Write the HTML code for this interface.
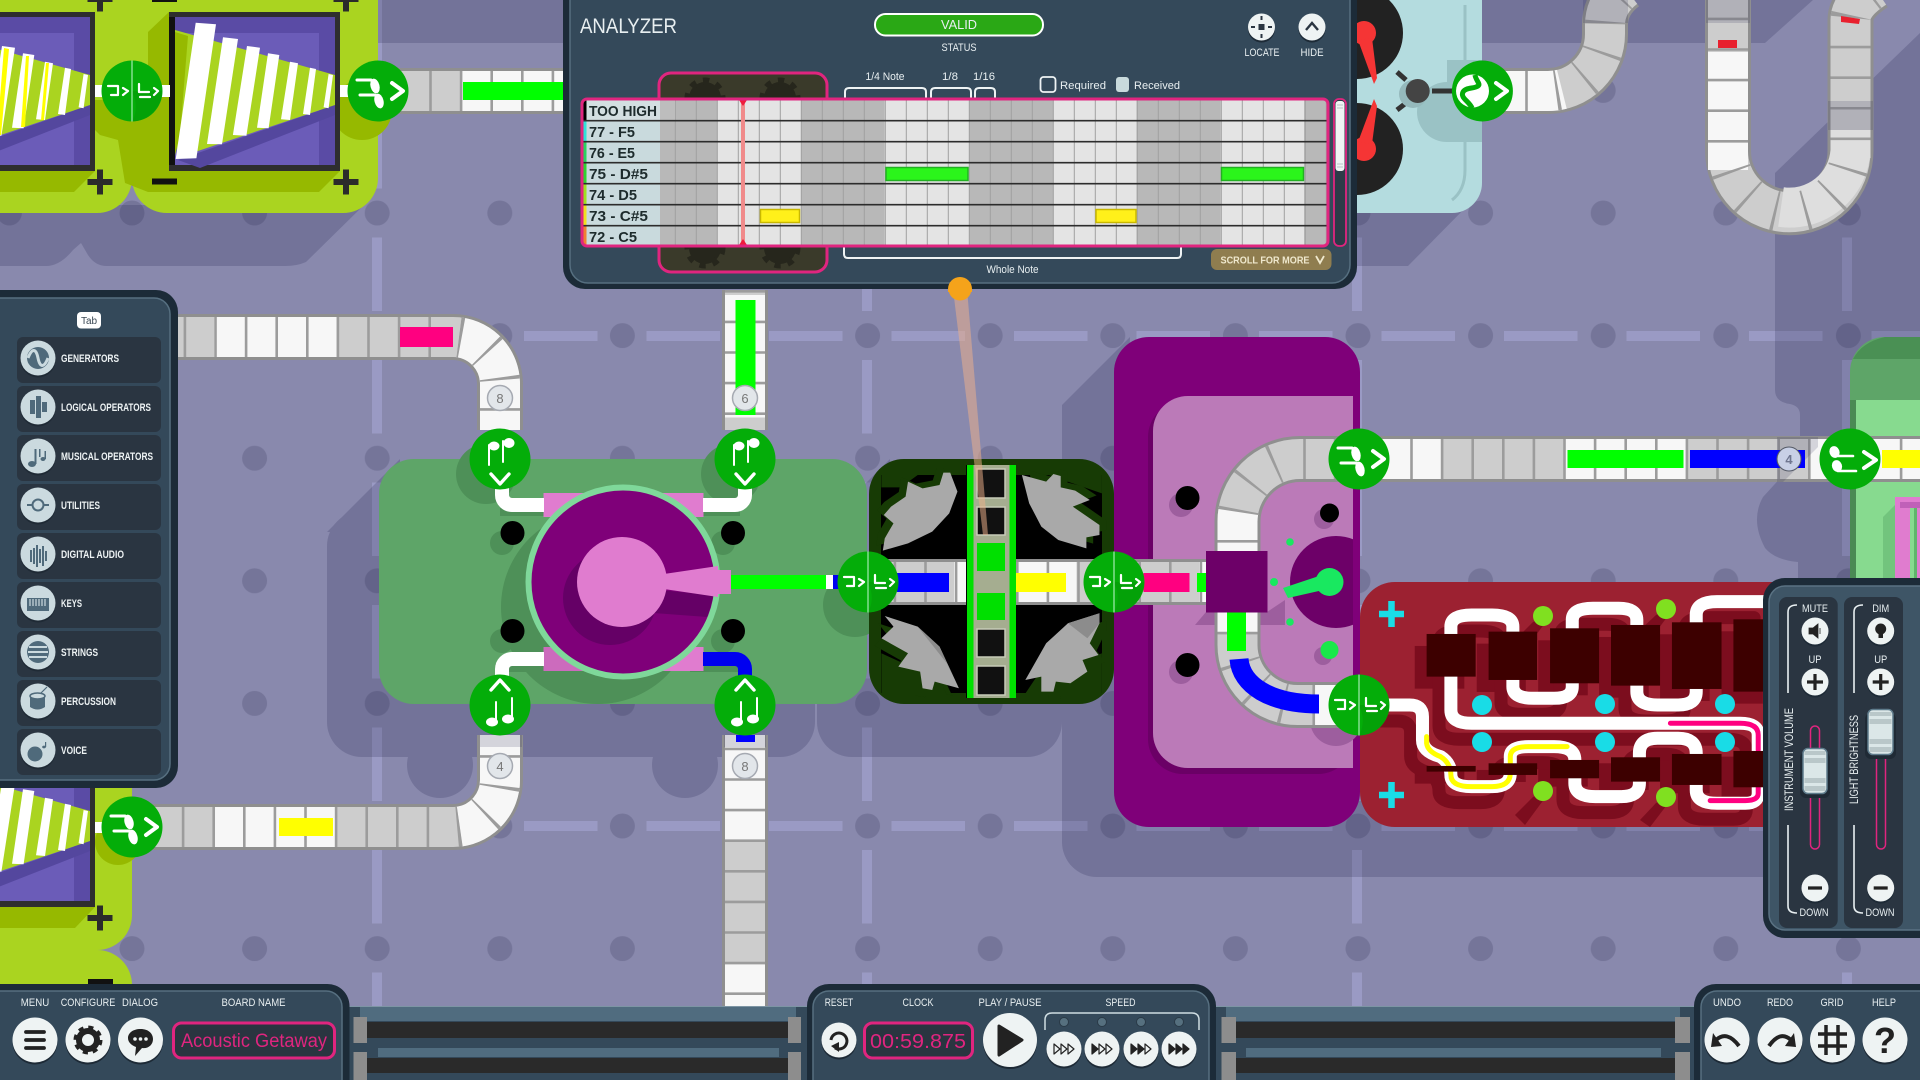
<!DOCTYPE html>
<html lang="en"><head><meta charset="utf-8"><title>Acoustic Getaway</title>
<style>
html,body{margin:0;padding:0;background:#8989ad;width:1920px;height:1080px;overflow:hidden}
svg{display:block}
text{font-family:"Liberation Sans",sans-serif}
.t{fill:#e8eff1;font-size:11px;text-anchor:middle}
.l{fill:#eef3f4;font-size:11px;font-weight:bold}
.r{fill:#1d2b2c;font-size:15px;font-weight:bold}
.cb{fill:none;stroke:#8f8f8f;stroke-width:46}
.cg{fill:none;stroke:#cdcdcd;stroke-width:40}
.cw{fill:none;stroke:#f7f7f7;stroke-width:40;stroke-dasharray:122.5 122.5}
.cs{fill:none;stroke:#9c9c9c;stroke-width:40;stroke-dasharray:2.6 28}
.ic{fill:none;stroke:#fff;stroke-linecap:round;stroke-linejoin:round}
.w{fill:none;stroke-linecap:round;stroke-linejoin:round;vector-effect:non-scaling-stroke}
</style></head><body>
<svg width="1920" height="1080" viewBox="0 0 1920 1080" xmlns="http://www.w3.org/2000/svg">
<defs>
<pattern id="dots" patternUnits="userSpaceOnUse" x="70.7" y="151.7" width="122.6" height="122.6"><circle cx="61.3" cy="61.3" r="12.5" fill="#757599"/></pattern>
<g id="cone">
 <rect x="169" y="12" width="171" height="159" fill="#2e2e2e"/>
 <rect x="175" y="17" width="160" height="148" fill="#5a4ba5"/>
 <rect x="175" y="33" width="144" height="132" fill="#6b5cb8"/>
 <rect x="169" y="17" width="6" height="148" fill="#111"/>
 <polygon points="178,160 335,105 335,115 200,168" fill="#54479e"/>
 <polygon points="175,30 335,75 335,105 177,158" fill="#aad420"/>
 <polygon points="175,32 188,36 180,135 175,155" fill="#96b900"/>
 <g fill="#fff">
 <polygon points="195.7,22.7 216,24.3 196.4,158.3 175.7,159"/>
 <polygon points="223,37.3 238,39 222,144.3 207,144"/>
 <polygon points="247,46 260,47.7 246.4,135.7 232.9,135"/>
 <polygon points="268,53.3 279.3,55 268.6,128.3 257,127.7"/>
 <polygon points="290,61.7 298,63.3 290,120 281,119.3"/>
 <polygon points="310,67.7 316,69 310,115 303,114"/>
 <polygon points="328.6,74 333,75 328.6,108.3 323.6,107.3"/>
 </g>
</g>
<g id="plus"><path d="M-12.5 0H12.5M0-12.5V12.5" stroke="#2b2b2b" stroke-width="6" fill="none"/></g>
<g id="pOut"><circle r="30.5" fill="#04ad09"/>
 <path class="ic" stroke-width="3" d="M-21 -11H-7M-18 4H-3"/>
 <ellipse cx="-3" cy="-5" rx="4.5" ry="7.5" fill="#fff" transform="rotate(-15 -3 -5)"/><ellipse cx="1" cy="10" rx="4.5" ry="7.5" fill="#fff" transform="rotate(-15 1 10)"/>
 <path class="ic" stroke-width="4" d="M14 -8L25 0L14 8"/></g>
<g id="pIn"><circle r="30.5" fill="#04ad09"/>
 <path class="ic" stroke-width="2.6" d="M-12 -3H3M-12 12H6"/>
 <ellipse cx="-15.500" cy="-7" rx="5" ry="6" fill="#fff" transform="rotate(-20 -15.500 -7)"/><ellipse cx="-13" cy="7" rx="5" ry="6" fill="#fff" transform="rotate(-20 -13 7)"/>
 <path class="ic" stroke-width="4" d="M14 -7L26 1L14 9"/></g>
<g id="pSplit"><circle r="30.5" fill="#04ad09"/><path d="M0 1A30.5 30.5 0 0 1 0 30.5A30.5 30.5 0 0 0 30 0H0Z" fill="#049507" opacity=".5"/>
 <path d="M0 -30.5V30.5" stroke="#8fe39a" stroke-width="1.4"/>
 <path class="ic" stroke-width="2.2" d="M-24 -5H-14V3M-21 4H-14M-9 -3L-4 0L-9 4M7 -7V1H17M8 6H18M22 -3L26 0L22 4"/></g>
<g id="pDown"><circle r="30.5" fill="#04ad09"/>
 <path class="ic" stroke-width="2" d="M-11 -14V6M3 -18V3"/>
 <ellipse cx="-6" cy="-13" rx="5.5" ry="4.5" fill="#fff"/><ellipse cx="9" cy="-16" rx="5.5" ry="5" fill="#fff"/>
 <path class="ic" stroke-width="3.4" d="M-9 15L0 25L9 15"/></g>
<g id="pUp"><circle r="30.5" fill="#04ad09"/>
 <path class="ic" stroke-width="2" d="M-4 -3V16M12 -7V13"/>
 <ellipse cx="-8" cy="17" rx="6" ry="4.5" fill="#fff"/><ellipse cx="8" cy="14" rx="6" ry="4.5" fill="#fff"/>
 <path class="ic" stroke-width="3.4" d="M-9 -15L0 -25L9 -15"/></g>
<g id="badge"><circle r="12.5" fill="#e2e6ea" stroke="#a6aab2" stroke-width="1.5"/></g>
<path id="c1" d="M378 91H570"/>
<path id="c2" d="M178 337H453A47 47 0 0 1 500 384V430"/>
<path id="c3" d="M745 290V430"/>
<path id="c4" d="M745 735V1012"/>
<path id="c5" d="M500 735V780A47 47 0 0 1 453 827H132"/>
<path id="c6" d="M868 582H1207"/>
<path id="c8" d="M1359 459H1300A62.5 62.5 0 0 0 1237.5 521.5V645A60 60 0 0 0 1297.5 705H1359"/>
<path id="c9" d="M1359 459H1925"/>
<path id="c10" d="M1482 91H1548A57 57 0 0 0 1605 34V25C1605 10 1612 -2 1625 -12"/>
<path id="c11" d="M1728 -10V151A61.25 61.25 0 0 0 1850.5 151V20C1850.5 8 1860 -2 1875 -12"/>
<path id="wire" class="w" d="M540 1125H580Q605 1125 605 1160V1230Q605 1265 640 1280Q660 1300 660 1335Q660 1370 700 1370H740Q775 1370 775 1330V1280Q775 1250 810 1250H860Q900 1250 900 1290V1360Q900 1400 940 1400H990Q1025 1400 1025 1360V1270Q1025 1225 1060 1225H1100Q1135 1225 1135 1270V1380Q1135 1420 1175 1420H1230Q1255 1420 1255 1390V1215Q1255 1180 1220 1180H700Q660 1180 660 1140V890Q660 855 700 855H740Q780 855 780 890V1070Q780 1105 820 1105H860Q895 1105 895 1070V870Q895 835 935 835H985Q1020 835 1020 870V1085Q1020 1125 1060 1125H1100Q1135 1125 1135 1085V855Q1135 815 1175 815H1270"/>
<g id="tmi"><circle r="22.5" cy="2" fill="#1d2a36"/><circle r="22.5" fill="#eef3f3"/></g>
<g id="row"><rect x="17" y="337" width="144" height="46" rx="6" fill="#2a3541"/><circle cx="38" cy="360" r="17.5" fill="#1f2a35"/><circle cx="38" cy="358" r="17.5" fill="#cbdadf"/></g>
<g id="sm"><circle r="13.5" cy="2" fill="#1d2a36"/><circle r="13.5" fill="#eef3f3"/></g>
<polygon id="g1" points="1058,452 1110,430 1160,395 1195,340 1212,275 1197,218 1183,218 1175,255 1140,265 1110,245 1105,290 1075,320 1060,345 1080,370 1062,415"/>
<polygon id="g2" points="1345,225 1395,245 1410,222 1425,228 1425,262 1455,272 1485,300 1450,320 1505,375 1505,405 1478,412 1478,445 1420,420 1385,380 1360,310"/>
<polygon id="g3" points="1062,648 1130,680 1175,740 1215,865 1165,845 1160,870 1140,865 1135,815 1090,800 1110,760 1055,715 1080,680"/>
<polygon id="g4" points="1505,640 1440,670 1395,730 1352,840 1385,830 1385,875 1410,875 1415,845 1445,850 1480,815 1470,780 1503,765 1485,730 1505,670"/>
</defs>

<rect width="1920" height="1080" fill="#8989ad"/>
<g stroke="#9a9ac4" stroke-width="10" stroke-dasharray="73.5 49" fill="none">
 <path d="M377 -7.5V1080M867 -7.5V1080M1357 -7.5V1080M1847 -7.5V1080"/>
 <path d="M34 336H1920M34 826H1920"/>
</g>
<rect width="1920" height="1080" fill="url(#dots)"/>

<!-- shadows -->
<g fill="#20204c" opacity=".2">
 <polygon points="378,0 565,0 565,43 378,43"/>
 <polygon points="1482,0 1813,0 1765,43 1482,43"/>
 <path d="M0 205H364L306 262Q297 266 285 266H107Q95 266 88 255L81 243L73 250Q60 266 46 266H0Z"/>
 <polygon points="1357,213 1473,200 1408,266 1357,266"/>
 <path d="M1920 33L1775 173V390Q1775 402 1790 404Q1800 406 1800 415V440H1815L1763 497Q1750 520 1765 548Q1775 560 1798 562V580H1920Z"/>
 <rect x="327" y="511" width="488" height="246" rx="35"/>
 <polygon points="400,459 327,532 400,532"/>
 <rect x="817" y="511" width="245" height="246" rx="35"/>
 <polygon points="890,459 817,532 890,532"/>
 <path d="M1130 337L1062 405V842A35 35 0 0 0 1097 877H1770V700H1114Z"/>
 <circle cx="440" cy="765" r="33"/><circle cx="685" cy="765" r="33"/>
</g>

<!-- lime blocks -->
<g fill="#aad420">
 <path d="M132 -50H378V178A35 35 0 0 1 343 213H167A35 35 0 0 1 132 178Z"/>
 <path d="M-50 -50H132V178A35 35 0 0 1 97 213H-50Z"/>
 <path d="M-50 770H132V915A35 35 0 0 1 97 950H-50Z"/>
 <path d="M-50 950H97A35 35 0 0 1 132 985V1000H-50Z"/>
</g>
<g fill="#96b900">
 <polygon points="-50,171 95,171 74,192 -50,192"/>
 <polygon points="95,100 148,100 148,192 125,183 118,140 100,135 95,130"/>
 <circle cx="362" cy="110" r="30"/>
 <polygon points="-50,907 95,907 75,928 -50,928"/>
 <circle cx="118" cy="842" r="23"/>
</g>
<polygon points="148,32 169,12 340,12 340,171 319,192 148,192" fill="#96b900"/>
<use href="#cone"/>
<use href="#cone" transform="translate(-245 0)"/>
<use href="#cone" transform="translate(-245 736)"/>
<g fill="#ffff00"><polygon points="4,48 9,49 1,135 -3,135"/><polygon points="26,56 29,56 25,127 21,127"/><polygon points="46,63 49,63 44,120 41,120"/></g>
<use href="#plus" x="100" y="182"/><use href="#plus" x="346" y="182"/><use href="#plus" x="100" y="-1"/><use href="#plus" x="346" y="-1"/><use href="#plus" x="100" y="918"/>
<rect x="152" y="178.5" width="25" height="6" fill="#111"/><rect x="152" y="-3" width="25" height="5" fill="#111"/><rect x="88" y="979" width="25" height="6" fill="#111"/>
<g fill="#fff"><rect x="95" y="85" width="10" height="12"/><rect x="160" y="85" width="10" height="12"/><rect x="340" y="85" width="12" height="12"/><rect x="95" y="822" width="10" height="11"/></g>

<!-- pale blue block & turntables -->
<path d="M1340 -10H1482V183A30 30 0 0 1 1452 213H1340Z" fill="#b4dcdf"/>
<path d="M1465 5V170Q1465 190 1452 200" stroke="#9ac2c5" stroke-width="3" fill="none"/>
<circle cx="1447" cy="112" r="30" fill="#9ac2c5"/><rect x="1447" y="60" width="35" height="82" fill="#9ac2c5"/>
<path d="M1432 88H1482V91H1432Z" fill="#9ac2c5"/>
<circle cx="1357" cy="33" r="46" fill="#222"/><circle cx="1357" cy="149" r="46" fill="#222"/>
<g fill="#f53535"><circle cx="1364" cy="33" r="12"/><polygon points="1358,40 1372,38 1377,78 1374,84"/><circle cx="1364" cy="149" r="12"/><polygon points="1358,142 1372,144 1377,106 1374,99"/></g>
<path d="M1397 72L1406 80M1397 110L1406 103M1432 91H1453" stroke="#333" stroke-width="5"/>
<circle cx="1413" cy="94" r="14" fill="#95b9bc"/><circle cx="1417.7" cy="91" r="12" fill="#444"/>

<!-- green block -->
<rect x="379" y="459" width="488" height="245" rx="35" fill="#5ea568"/>
<g fill="#4e9058">
 <circle cx="598" cy="607" r="97"/>
 <circle cx="502" cy="543" r="12"/><circle cx="723" cy="543" r="12"/><circle cx="502" cy="641" r="12"/><circle cx="723" cy="641" r="12"/>
 <circle cx="486" cy="474" r="30"/><circle cx="731" cy="474" r="30"/>
 <rect x="500" y="508" width="60" height="8"/><rect x="690" y="508" width="50" height="8"/>
 <rect x="495" y="664" width="55" height="8"/><rect x="690" y="664" width="50" height="8"/>
 <circle cx="855" cy="605" r="32"/>
</g>
<g fill="#000"><circle cx="512.5" cy="533" r="12"/><circle cx="733" cy="533" r="12"/><circle cx="512.5" cy="631" r="12"/><circle cx="733" cy="631" r="12"/></g>
<g fill="#e07ccf"><rect x="543.5" y="493" width="160" height="24"/><rect x="543.5" y="647" width="160" height="24"/></g>
<rect x="543.5" y="647" width="40" height="24" fill="#cc6bbd"/>
<path d="M502 480V495A10 10 0 0 0 512 505H544M745 480V495A10 10 0 0 1 735 505H703M502 680V669A10 10 0 0 1 512 659H544" fill="none" stroke="#fff" stroke-width="14"/>
<path d="M703 659H735A10 10 0 0 1 745 669V680" fill="none" stroke="#0000f0" stroke-width="14"/>
<circle cx="623" cy="582" r="94.5" fill="#7f0079" stroke="#7fd89a" stroke-width="6"/>
<clipPath id="hb"><circle cx="623" cy="582" r="91"/></clipPath>
<g clip-path="url(#hb)"><circle cx="610" cy="598" r="47" fill="#650066"/><polygon points="660,590 720,596 720,618 640,612" fill="#650066"/></g>
<circle cx="622" cy="582" r="45" fill="#e07ccf"/>
<polygon points="664,574 718,566 718,597 664,589" fill="#e07ccf"/>
<rect x="718" y="570" width="13" height="24" fill="#e07ccf"/>
<rect x="731" y="575" width="95" height="14" fill="#00ff00"/><rect x="826" y="575" width="7" height="14" fill="#fff"/><rect x="833" y="575" width="6" height="14" fill="#0000f0"/>

<!-- gear block -->
<rect x="869" y="459" width="245" height="245" rx="35" fill="#173b05"/>
<rect x="881" y="475" width="221" height="218" fill="#000"/>
<g transform="translate(370 400) scale(.4847 .3333)">
 <polygon fill="#173b05" points="1055,225 1130,225 1095,262 1055,262"/>
 <polygon fill="#173b05" points="1400,225 1510,225 1510,280"/>
 <g fill="#173b05">
  <use href="#g1" transform="translate(-14 -14)"/><use href="#g2" transform="translate(14 -14)"/>
  <use href="#g3" transform="translate(-14 22)"/><use href="#g4" transform="translate(14 22)"/>
  <polygon points="1055,760 1055,885 1190,885 1170,820 1100,790"/>
  <polygon points="1510,760 1510,885 1350,885 1380,820 1460,790"/>
 </g>
 <g fill="#a9a9a9"><use href="#g1"/><use href="#g2"/><use href="#g3"/><use href="#g4"/></g>
 <polygon fill="#8c8c8c" points="1130,680 1175,740 1215,865 1190,790"/>
 <polygon fill="#8c8c8c" points="1440,670 1505,640 1505,670 1480,715"/>
</g>

<!-- purple block -->
<rect x="1114" y="337" width="246" height="490" rx="35" fill="#7f0079"/>
<rect x="1148" y="402" width="205" height="372" rx="35" fill="#6b0066"/>
<path d="M1188 396H1353V768H1188A35 35 0 0 1 1153 733V431A35 35 0 0 1 1188 396Z" fill="#bb7ab8"/>
<g fill="#9d5e9e"><circle cx="1181" cy="505" r="12"/><circle cx="1181" cy="672" r="12"/><circle cx="1324" cy="519" r="10"/><circle cx="1323" cy="656" r="9"/><polygon points="1206,612 1267,612 1285,600 1285,625 1230,625 1195,625"/><circle cx="1336" cy="720" r="26"/></g>
<g fill="#000"><circle cx="1187.5" cy="498" r="12"/><circle cx="1187.5" cy="665" r="12"/><circle cx="1329.5" cy="513" r="9.5"/></g>
<circle cx="1329.5" cy="650" r="9" fill="#19e84a"/>
<clipPath id="pc"><rect x="1280" y="530" width="73" height="105"/></clipPath>
<circle cx="1336" cy="582" r="46" fill="#6d0068" clip-path="url(#pc)"/>

<!-- red block -->
<path d="M1395 582H1780V827H1395A35 35 0 0 1 1360 792V617A35 35 0 0 1 1395 582Z" fill="#9c2131"/>
<g fill="#7c0d1e"><polygon points="1533,622 1553,612 1525,650 1515,640"/><polygon points="1656,615 1676,605 1650,640 1640,630"/><polygon points="1533,797 1553,787 1525,825 1515,815"/><polygon points="1656,803 1676,793 1650,827 1640,820"/></g>
<g transform="translate(1110 330) scale(.5165 .3333)">
 <g fill="#7c0d1e">
 <rect x="590" y="948" width="96" height="128"/><rect x="710" y="941" width="95" height="145"/><rect x="829" y="931" width="96" height="165"/><rect x="947" y="921" width="96" height="182"/><rect x="1065" y="913" width="96" height="200"/><rect x="1184" y="904" width="80" height="217"/>
 <rect x="590" y="1325" width="96" height="36"/><rect x="710" y="1320" width="95" height="36"/><rect x="829" y="1310" width="96" height="60"/><rect x="947" y="1300" width="96" height="80"/><rect x="1065" y="1290" width="96" height="100"/><rect x="1184" y="1280" width="80" height="120"/>
 </g>
 <use href="#wire" stroke="#7c0d1e" stroke-width="13" transform="translate(-23 48)"/>
 <use href="#wire" stroke="#fff" stroke-width="13"/>
 <path class="w" stroke="#ffff00" stroke-width="5" d="M613 1220V1240Q615 1265 640 1280Q660 1300 660 1335Q660 1370 700 1370H740Q775 1370 775 1330V1280Q775 1250 810 1250H885"/>
 <path class="w" stroke="#ff0080" stroke-width="5" d="M1085 1180H1220Q1255 1180 1255 1215V1260M1162 1412H1230Q1255 1412 1255 1390V1372"/>
 <g fill="#3d0000">
 <rect x="613" y="912" width="95" height="128"/><rect x="733" y="905" width="94" height="145"/><rect x="852" y="895" width="95" height="165"/><rect x="970" y="885" width="95" height="182"/><rect x="1088" y="877" width="96" height="200"/><rect x="1207" y="868" width="60" height="217"/>
 <rect x="613" y="1308" width="95" height="17"/><rect x="733" y="1300" width="94" height="35"/><rect x="852" y="1290" width="95" height="55"/><rect x="970" y="1282" width="95" height="73"/><rect x="1088" y="1272" width="96" height="93"/><rect x="1207" y="1263" width="60" height="109"/>
 </g>
</g>
<g fill="#80e020"><circle cx="1543" cy="616" r="10"/><circle cx="1666" cy="609" r="10"/><circle cx="1543" cy="791" r="10"/><circle cx="1666" cy="797" r="10"/></g>
<g fill="#19dce6"><circle cx="1482" cy="705" r="10"/><circle cx="1605" cy="704" r="10"/><circle cx="1725" cy="704" r="10"/><circle cx="1482" cy="742" r="10"/><circle cx="1605" cy="742" r="10"/><circle cx="1725" cy="742" r="10"/></g>
<path d="M1391.5 601V627M1379 614H1404M1391.5 782V808M1379 795H1404" stroke="#19dce6" stroke-width="6.5" fill="none"/>

<!-- right green block -->
<path d="M1885 337H1925V600H1850V372A35 35 0 0 1 1885 337Z" fill="#5ea568"/>
<path d="M1885 337H1925V359H1853Q1862 342 1885 337Z" fill="#4a9054"/>
<rect x="1850" y="400" width="6" height="190" fill="#4a8a54"/>
<rect x="1856" y="400" width="70" height="190" fill="#87da8f"/>
<polygon points="1883,517 1895,505 1895,590 1883,590" fill="#72c47d"/>
<rect x="1895" y="497" width="30" height="90" fill="#e07ccf"/>
<rect x="1900" y="502" width="20" height="6" fill="#c060b8"/>
<rect x="1910" y="508" width="4" height="80" fill="#87da8f"/>
<rect x="1914" y="508" width="3" height="80" fill="#5fb56b"/>

<!-- conveyors -->
<g><use href="#c1" class="cb"/><use href="#c1" class="cg"/><use href="#c1" class="cw" style="stroke-dashoffset:162"/><use href="#c1" class="cs" style="stroke-dashoffset:10"/></g>
<g><use href="#c2" class="cb"/><use href="#c2" class="cg"/><use href="#c2" class="cw" style="stroke-dashoffset:209"/><use href="#c2" class="cs" style="stroke-dashoffset:25"/></g>
<g><use href="#c3" class="cb"/><use href="#c3" class="cg"/><use href="#c3" class="cw" style="stroke-dashoffset:240"/><use href="#c3" class="cs"/></g>
<g><use href="#c4" class="cb"/><use href="#c4" class="cg"/><use href="#c4" class="cw" style="stroke-dashoffset:18"/><use href="#c4" class="cs" style="stroke-dashoffset:18"/></g>
<g><use href="#c5" class="cb"/><use href="#c5" class="cg"/><use href="#c5" class="cw" style="stroke-dashoffset:10.5"/><use href="#c5" class="cs" style="stroke-dashoffset:10.5"/></g>
<g><use href="#c6" class="cb"/><use href="#c6" class="cg"/><use href="#c6" class="cw" style="stroke-dashoffset:159"/><use href="#c6" class="cs" style="stroke-dashoffset:5"/></g>
<g><use href="#c8" class="cb"/><use href="#c8" class="cg"/><use href="#c8" class="cw" style="stroke-dashoffset:99"/><use href="#c8" class="cs" style="stroke-dashoffset:8"/></g>
<g><use href="#c9" class="cb"/><use href="#c9" class="cg"/><use href="#c9" class="cw" style="stroke-dashoffset:40"/><use href="#c9" class="cs" style="stroke-dashoffset:10"/></g>
<g><use href="#c10" class="cb"/><use href="#c10" class="cg"/><use href="#c10" class="cw" style="stroke-dasharray:80 1000"/><use href="#c10" class="cs" style="stroke-dashoffset:18"/></g>
<g><use href="#c11" class="cb"/><use href="#c11" class="cg"/><path d="M1728 52V170" class="cw" style="stroke-dasharray:none"/><path d="M1850.5 158V130" stroke="#dedede" stroke-width="40" fill="none"/><path d="M1781 207A61 61 0 0 0 1850.5 151" stroke="#dedede" stroke-width="40" fill="none"/><use href="#c11" class="cs" style="stroke-dashoffset:3"/></g>
<!-- shade on conveyors -->
<g fill="#20204c" opacity=".16">
 <rect x="1583" y="0" width="45" height="23"/><rect x="1706" y="0" width="44" height="23"/>
 <rect x="1828" y="101" width="45" height="29"/>
 <rect x="480" y="735" width="42" height="12"/><rect x="724" y="735" width="42" height="12"/>
 <polygon points="1777,437 1818,437 1818,447 1783,482 1777,482"/>
</g>

<!-- signals -->
<rect x="463" y="82" width="105" height="18" fill="#00ff00"/>
<rect x="400" y="327" width="53" height="20" fill="#ff0080"/>
<rect x="735.500" y="300" width="20" height="115" fill="#00ff00"/>
<rect x="736" y="735" width="19" height="7" fill="#0000ff"/>
<rect x="279" y="818" width="54" height="18" fill="#ffff00"/>
<rect x="897" y="573" width="52" height="19" fill="#0000ff"/>
<rect x="1016" y="573" width="50" height="19" fill="#ffff00"/>
<rect x="1143.500" y="573" width="46" height="19" fill="#ff0080"/>
<rect x="1197" y="573" width="10" height="19" fill="#00ff00"/>
<rect x="1227" y="612" width="19" height="39" fill="#00ff00"/>
<path d="M1239 659C1241 685 1270 704 1319 704" fill="none" stroke="#0000ff" stroke-width="19"/>
<rect x="1567.500" y="450" width="116" height="18" fill="#00ff00"/>
<rect x="1690" y="450" width="115" height="18" fill="#0000ff"/>
<rect x="1882" y="450" width="40" height="18" fill="#ffff00"/>
<rect x="1718" y="40" width="19" height="8" fill="#e8202e"/>
<polygon points="1841,16 1860,19 1859,24 1841,22" fill="#e8202e"/>

<!-- mixer column -->
<rect x="966" y="465" width="50" height="233" fill="#000"/>
<rect x="967" y="465" width="49" height="233" fill="#00e000"/>
<rect x="973.500" y="465" width="36" height="233" fill="#a5ad90"/>
<g fill="#111" stroke="#c7cbb7" stroke-width="1.5">
 <rect x="977" y="469" width="28" height="29"/><rect x="977" y="507" width="28" height="28"/>
 <rect x="977" y="629" width="28" height="28"/><rect x="977" y="666" width="28" height="29"/>
</g>
<rect x="977" y="543" width="28" height="28" fill="#00e000"/><rect x="977" y="593" width="28" height="27" fill="#00e000"/>
<rect x="1206" y="551" width="61.500" height="61.500" fill="#6d0068"/>

<!-- lollipop -->
<circle cx="1329.5" cy="582" r="14" fill="#19e860"/>
<polygon points="1325,574 1332,588 1288,598 1283,588" fill="#19e860"/>
<g fill="#19e860"><circle cx="1290" cy="542" r="3.8"/><circle cx="1274" cy="582" r="4"/><circle cx="1290" cy="622" r="3.8"/></g>

<!-- orange link line -->
<polygon points="953,289 967,289 988,535 983,535" fill="#eeb08a" opacity=".52"/>

<!-- badges -->
<use href="#badge" x="500" y="398"/><text x="500" y="403" font-size="13" fill="#777" text-anchor="middle">8</text>
<use href="#badge" x="745" y="398"/><text x="745" y="403" font-size="13" fill="#777" text-anchor="middle">6</text>
<use href="#badge" x="500" y="766"/><text x="500" y="771" font-size="13" fill="#777" text-anchor="middle">4</text>
<use href="#badge" x="745" y="766"/><text x="745" y="771" font-size="13" fill="#777" text-anchor="middle">8</text>
<circle cx="1789" cy="459" r="12" fill="#c8d0e6" stroke="#555a66" stroke-width="1"/><text x="1789" y="464" font-size="13" font-weight="bold" fill="#6f7690" text-anchor="middle">4</text>

<!-- ports -->
<use href="#pSplit" x="132" y="91"/>
<use href="#pOut" x="378" y="91"/>
<use href="#pOut" x="132" y="827"/>
<use href="#pDown" x="500" y="459"/><use href="#pDown" x="745" y="459"/>
<use href="#pUp" x="500" y="705"/><use href="#pUp" x="745" y="705"/>
<use href="#pSplit" x="868" y="582"/><use href="#pSplit" x="1114" y="582"/>
<use href="#pOut" x="1359" y="459"/><use href="#pSplit" x="1359" y="705"/>
<use href="#pIn" x="1850" y="459"/>
<circle cx="1482.400" cy="91" r="30.5" fill="#04ad09"/>
<circle cx="1472.500" cy="91" r="16.5" fill="#fff"/>
<path d="M1475 75C1476 81 1481 84 1478 86C1474 89 1466 87 1463 92C1460 98 1469 101 1472 108" fill="none" stroke="#04ad09" stroke-width="5"/>
<path class="ic" stroke-width="4" d="M1496 83L1507 91L1496 99"/>

<circle cx="960" cy="289" r="11.500" fill="#f5a31a"/>

<!-- ANALYZER panel -->
<rect x="563" y="-30" width="794" height="319" rx="22" fill="#1c2b38"/>
<rect x="570" y="-30" width="780" height="313" rx="18" fill="#34495a" stroke="#566f80" stroke-width="1.5"/>
<path d="M948 289A12 12 0 0 1 972 289V292H948Z" fill="#f5a31a"/>
<text x="580" y="33" font-size="21" fill="#e8eff1" textLength="97" lengthAdjust="spacingAndGlyphs">ANALYZER</text>
<rect x="875" y="14" width="168" height="21.500" rx="10.500" fill="#2aa815" stroke="#fff" stroke-width="2"/>
<text x="959" y="29" class="t" style="font-size:13px" textLength="36" lengthAdjust="spacingAndGlyphs">VALID</text>
<text x="959" y="51" class="t" textLength="35" lengthAdjust="spacingAndGlyphs">STATUS</text>
<use href="#sm" x="1261.500" y="27"/><use href="#sm" x="1312" y="27"/>
<g fill="#2a3541"><rect x="1258.500" y="24" width="6" height="6"/><rect x="1260.500" y="16" width="2" height="4"/><rect x="1260.500" y="34" width="2" height="4"/><rect x="1251" y="26" width="4" height="2"/><rect x="1268" y="26" width="4" height="2"/></g>
<path d="M1306 30L1312 23L1318 30" fill="none" stroke="#2a3541" stroke-width="2.4"/>
<text x="1262" y="56" class="t" textLength="35" lengthAdjust="spacingAndGlyphs">LOCATE</text>
<text x="1312" y="56" class="t" textLength="23" lengthAdjust="spacingAndGlyphs">HIDE</text>
<text x="885" y="80" class="t" textLength="39" lengthAdjust="spacingAndGlyphs">1/4 Note</text>
<text x="950" y="80" class="t" textLength="16" lengthAdjust="spacingAndGlyphs">1/8</text>
<text x="984" y="80" class="t" textLength="22" lengthAdjust="spacingAndGlyphs">1/16</text>
<path d="M845 100V92Q845 88 849 88H922Q926 88 926 92V100M931 100V92Q931 88 935 88H967Q971 88 971 92V100M975 100V92Q975 88 979 88H991Q995 88 995 92V100M844 245V254Q844 258 848 258H1177Q1181 258 1181 254V245" fill="none" stroke="#eef3f4" stroke-width="2"/>
<text x="1012.500" y="273" class="t" textLength="52" lengthAdjust="spacingAndGlyphs">Whole Note</text>
<rect x="1040.500" y="77" width="15" height="15" rx="3" fill="none" stroke="#eef3f4" stroke-width="1.8"/>
<text x="1060" y="89" class="t" style="text-anchor:start" textLength="46" lengthAdjust="spacingAndGlyphs">Required</text>
<rect x="1116" y="77" width="13" height="15" rx="3" fill="#c8dadc"/>
<text x="1134" y="89" class="t" style="text-anchor:start" textLength="46" lengthAdjust="spacingAndGlyphs">Received</text>
<!-- hidden gear block behind -->
<rect x="659" y="73" width="168" height="199" rx="12" fill="#3a3a2a" stroke="#e0257f" stroke-width="3"/>
<g fill="#26261c" stroke="#26261c">
 <circle cx="705" cy="98" r="16" stroke-width="0"/><circle cx="705" cy="98" r="17" fill="none" stroke-width="7" stroke-dasharray="6 7"/>
 <circle cx="780" cy="98" r="16" stroke-width="0"/><circle cx="780" cy="98" r="17" fill="none" stroke-width="7" stroke-dasharray="6 7"/>
 <circle cx="705" cy="248" r="16" stroke-width="0"/><circle cx="705" cy="248" r="17" fill="none" stroke-width="7" stroke-dasharray="6 7"/>
 <circle cx="780" cy="248" r="16" stroke-width="0"/><circle cx="780" cy="248" r="17" fill="none" stroke-width="7" stroke-dasharray="6 7"/>
</g>
<!-- grid -->
<rect x="583" y="100" width="745" height="145" fill="#e4e4e4"/>
<g fill="#b8b8b8"><rect x="660" y="100" width="57" height="145"/><rect x="801" y="100" width="83.500" height="145"/><rect x="969" y="100" width="84" height="145"/><rect x="1136.500" y="100" width="84.200" height="145"/><rect x="1304" y="100" width="24" height="145"/></g>
<path d="M674.800 172.500H1328" stroke="#a0a0a0" stroke-width="145" stroke-dasharray="1 20" fill="none"/>
<rect x="583" y="100" width="77" height="145" fill="#c9dadd"/>
<rect x="583" y="100" width="92" height="21" fill="#bdbdbd"/><rect x="583" y="100" width="77" height="21" fill="#d3dfe1"/>
<g><rect x="583" y="100" width="3.500" height="21" fill="#000"/><rect x="583" y="121" width="3.500" height="21" fill="#30e0d8"/><rect x="583" y="142" width="3.500" height="21" fill="#2ad060"/><rect x="583" y="163" width="3.500" height="21" fill="#30d030"/><rect x="583" y="184" width="3.500" height="21" fill="#a0e020"/><rect x="583" y="205" width="3.500" height="21" fill="#f0e020"/><rect x="583" y="226" width="3.500" height="19" fill="#f08030"/></g>
<path d="M583 120.700H1328M583 141.700H1328M583 162.700H1328M583 183.700H1328M583 204.700H1328M583 225.700H1328" stroke="#2c2c2c" stroke-width="1.600"/>
<text x="589" y="116" class="r" textLength="68" lengthAdjust="spacingAndGlyphs">TOO HIGH</text>
<text x="589" y="137" class="r" textLength="46" lengthAdjust="spacingAndGlyphs">77 - F5</text>
<text x="589" y="158" class="r" textLength="46" lengthAdjust="spacingAndGlyphs">76 - E5</text>
<text x="589" y="179" class="r" textLength="59" lengthAdjust="spacingAndGlyphs">75 - D#5</text>
<text x="589" y="200" class="r" textLength="48" lengthAdjust="spacingAndGlyphs">74 - D5</text>
<text x="589" y="221" class="r" textLength="59" lengthAdjust="spacingAndGlyphs">73 - C#5</text>
<text x="589" y="242" class="r" textLength="48" lengthAdjust="spacingAndGlyphs">72 - C5</text>
<g fill="#2bf51b" stroke="#22b022" stroke-width="1.500"><rect x="886" y="167.500" width="82" height="13"/><rect x="1221.500" y="167.500" width="82" height="13"/></g>
<g fill="#fff01a" stroke="#c9b800" stroke-width="1.500"><rect x="760.500" y="209.500" width="39" height="13"/><rect x="1096" y="209.500" width="40" height="13"/></g>
<rect x="741" y="100" width="4" height="145" fill="#f08a8a"/>
<polygon points="739,100 747,100 743,106" fill="#ee1c3c"/><polygon points="739,245 747,245 743,239" fill="#ee1c3c"/>
<rect x="582" y="99" width="746" height="147" rx="5" fill="none" stroke="#e0257f" stroke-width="3"/>
<rect x="1334" y="99" width="12" height="147" rx="5" fill="#2c3b48" stroke="#e0257f" stroke-width="1.800"/>
<rect x="1335.500" y="101" width="9" height="70" rx="3" fill="#f0f4f4"/>
<path d="M1337 105H1343M1337 108H1343M1337 164H1343M1337 167H1343" stroke="#b8c4c8" stroke-width="1"/>
<rect x="1211" y="249" width="120.500" height="21" rx="6" fill="#8f7d4f"/>
<text x="1265" y="263.500" class="t" style="fill:#efe8cd;font-weight:bold;font-size:10.500px" textLength="89" lengthAdjust="spacingAndGlyphs">SCROLL FOR MORE</text>
<path d="M1316 256L1320 263L1324 256" fill="none" stroke="#efe8cd" stroke-width="1.800"/>

<!-- left panel -->
<path d="M-20 290H156A22 22 0 0 1 178 312V766A22 22 0 0 1 156 788H-20Z" fill="#1c2b38"/>
<path d="M-20 298H154A16 16 0 0 1 170 314V764A16 16 0 0 1 154 780H-20Z" fill="#34495a" stroke="#566f80" stroke-width="1.500"/>
<rect x="77" y="312" width="24" height="16.500" rx="4" fill="#fff"/>
<text x="89" y="324" font-size="10" fill="#3a4854" text-anchor="middle">Tab</text>
<use href="#row"/><use href="#row" y="49"/><use href="#row" y="98"/><use href="#row" y="147"/><use href="#row" y="196"/><use href="#row" y="245"/><use href="#row" y="294"/><use href="#row" y="343"/><use href="#row" y="392"/>
<text class="l" x="61" y="362" textLength="58" lengthAdjust="spacingAndGlyphs">GENERATORS</text>
<text class="l" x="61" y="411" textLength="90" lengthAdjust="spacingAndGlyphs">LOGICAL OPERATORS</text>
<text class="l" x="61" y="460" textLength="92" lengthAdjust="spacingAndGlyphs">MUSICAL OPERATORS</text>
<text class="l" x="61" y="509" textLength="39" lengthAdjust="spacingAndGlyphs">UTILITIES</text>
<text class="l" x="61" y="558" textLength="63" lengthAdjust="spacingAndGlyphs">DIGITAL AUDIO</text>
<text class="l" x="61" y="607" textLength="21" lengthAdjust="spacingAndGlyphs">KEYS</text>
<text class="l" x="61" y="656" textLength="37" lengthAdjust="spacingAndGlyphs">STRINGS</text>
<text class="l" x="61" y="705" textLength="55" lengthAdjust="spacingAndGlyphs">PERCUSSION</text>
<text class="l" x="61" y="754" textLength="26" lengthAdjust="spacingAndGlyphs">VOICE</text>
<g fill="#4f6a7b">
 <circle cx="38" cy="358" r="11"/><path d="M28 358C32 348 36 348 38 358S44 368 48 358" fill="none" stroke="#cbdadf" stroke-width="3"/>
 <path d="M30 400h5v14h-5zM36 396h5v22h-5zM42 402h5v10h-5z"/>
 <ellipse cx="32" cy="464" rx="4" ry="3"/><rect x="34.500" y="449" width="2" height="15"/><ellipse cx="43" cy="459" rx="2.500" ry="2"/><rect x="44.500" y="451" width="1.500" height="8"/><rect x="39" y="449" width="1.500" height="8"/>
 <circle cx="38" cy="505" r="5.500" fill="none" stroke="#4f6a7b" stroke-width="2"/><rect x="27" y="504" width="5" height="2"/><rect x="44" y="504" width="5" height="2"/>
 <path d="M30 550h2v12h-2zM33 548h2v16h-2zM36 545h2v22h-2zM39 549h2v14h-2zM42 546h2v20h-2zM45 551h2v10h-2z"/>
 <path d="M27 598h22v13h-22z"/><path d="M30 599v7M33 599v7M36 599v7M39 599v7M42 599v7M45 599v7" stroke="#cbdadf" stroke-width="1.200"/>
 <circle cx="38" cy="652" r="11"/><path d="M29 647H47M28 652H48M29 657H47" stroke="#cbdadf" stroke-width="2"/>
 <path d="M30 696h15v11q-7.500 5 -15 0z"/><ellipse cx="37.500" cy="696" rx="7.500" ry="3" fill="#cbdadf" stroke="#4f6a7b" stroke-width="1.500"/><path d="M41 693L47 687" stroke="#4f6a7b" stroke-width="1.200"/>
 <circle cx="35" cy="754" r="7.500"/><ellipse cx="44" cy="747" rx="1.800" ry="1.400"/><rect x="45" y="742" width="1.200" height="5"/>
</g>

<!-- bottom bands -->
<rect x="349" y="1006" width="460" height="74" fill="#34495a"/><rect x="1216" y="1006" width="480" height="74" fill="#34495a"/>
<path d="M349 1006.500H809M1216 1006.500H1696" stroke="#7d95a4" stroke-width="1"/>
<g fill="#506c7f"><rect x="360" y="1007" width="436" height="14"/><rect x="378" y="1048" width="401" height="9"/><rect x="1226" y="1007" width="454" height="14"/><rect x="1246" y="1048" width="415" height="9"/></g>
<g fill="#2a2a2a"><rect x="367" y="1022" width="421" height="16"/><rect x="367" y="1058" width="421" height="15"/><rect x="1236" y="1022" width="439" height="16"/><rect x="1236" y="1058" width="439" height="15"/></g>
<g fill="#8d8d8d"><rect x="353.500" y="1017" width="13.500" height="26"/><rect x="353.500" y="1052" width="13.500" height="28"/><rect x="788" y="1017" width="13" height="26"/><rect x="788" y="1052" width="13" height="28"/><rect x="1221.500" y="1017" width="14.500" height="26"/><rect x="1221.500" y="1052" width="14.500" height="28"/><rect x="1675" y="1017" width="15" height="26"/><rect x="1675" y="1052" width="15" height="28"/></g>

<!-- bottom panel 1 -->
<path d="M-20 984H327A22 22 0 0 1 349.500 1006V1090H-20Z" fill="#1c2b38"/>
<path d="M-20 991H325A16 16 0 0 1 342 1007V1090H-20Z" fill="#34495a" stroke="#566f80" stroke-width="1.500"/>
<text x="35" y="1006" class="t" textLength="28.500" lengthAdjust="spacingAndGlyphs">MENU</text>
<text x="88" y="1006" class="t" textLength="54.500" lengthAdjust="spacingAndGlyphs">CONFIGURE</text>
<text x="140" y="1006" class="t" textLength="36" lengthAdjust="spacingAndGlyphs">DIALOG</text>
<text x="253.500" y="1006" class="t" textLength="64" lengthAdjust="spacingAndGlyphs">BOARD NAME</text>
<use href="#tmi" x="35" y="1040"/><use href="#tmi" x="88" y="1040"/><use href="#tmi" x="140.500" y="1040"/>
<path d="M26 1032H44M26 1040H44M26 1048H44" stroke="#222" stroke-width="3.800" stroke-linecap="round"/>
<circle cx="88" cy="1040" r="9" fill="none" stroke="#222" stroke-width="6"/><circle cx="88" cy="1040" r="12.500" fill="none" stroke="#222" stroke-width="4" stroke-dasharray="5 4.800"/>
<path d="M140.500 1029C149 1029 153 1034 153 1039C153 1045 148 1049 142 1048L135 1056L136 1047C131 1045 128 1042 128 1038C128 1033 133 1029 140.500 1029Z" fill="#222"/>
<g fill="#eef3f3"><circle cx="135" cy="1039" r="1.800"/><circle cx="140.500" cy="1039" r="1.800"/><circle cx="146" cy="1039" r="1.800"/></g>
<rect x="173.500" y="1023" width="161" height="35" rx="8" fill="#2a3540" stroke="#e0257f" stroke-width="3"/>
<text x="254" y="1047" font-size="19" fill="#e0257f" text-anchor="middle" textLength="146" lengthAdjust="spacingAndGlyphs">Acoustic Getaway</text>

<!-- bottom panel 2 -->
<path d="M807 1090V1006A22 22 0 0 1 829 984H1194A22 22 0 0 1 1216 1006V1090Z" fill="#1c2b38"/>
<path d="M813 1090V1007A16 16 0 0 1 829 991H1193A16 16 0 0 1 1209 1007V1090Z" fill="#34495a" stroke="#566f80" stroke-width="1.500"/>
<text x="839" y="1006" class="t" textLength="28.500" lengthAdjust="spacingAndGlyphs">RESET</text>
<text x="918" y="1006" class="t" textLength="31" lengthAdjust="spacingAndGlyphs">CLOCK</text>
<text x="1010" y="1006" class="t" textLength="63" lengthAdjust="spacingAndGlyphs">PLAY / PAUSE</text>
<text x="1120.500" y="1006" class="t" textLength="30" lengthAdjust="spacingAndGlyphs">SPEED</text>
<circle cx="839" cy="1042" r="17.500" fill="#1d2a36"/><circle cx="839" cy="1040" r="17.500" fill="#eef3f3"/>
<path d="M835 1048A8 8 0 1 0 831 1040" fill="none" stroke="#222" stroke-width="3"/><polygon points="839,1042 831,1046 839,1052" fill="#222"/>
<rect x="864.500" y="1023" width="108" height="35" rx="8" fill="#2a3540" stroke="#e0257f" stroke-width="3"/>
<text x="918" y="1048" font-size="20" fill="#e0257f" text-anchor="middle" textLength="96" lengthAdjust="spacingAndGlyphs">00:59.875</text>
<circle cx="1010" cy="1042" r="27" fill="#1d2a36"/><circle cx="1010" cy="1040" r="27" fill="#eef3f3"/>
<polygon points="999,1026 1022,1040 999,1055" fill="#222" stroke="#222" stroke-width="3" stroke-linejoin="round"/>
<path d="M1045 1030V1020Q1045 1013 1052 1013H1192Q1199 1013 1199 1020V1030" fill="none" stroke="#cfdde2" stroke-width="1.500"/>
<g fill="#56707f" stroke="#2a3a47"><circle cx="1064" cy="1022" r="4.500"/><circle cx="1102" cy="1022" r="4.500"/><circle cx="1141" cy="1022" r="4.500"/><circle cx="1179" cy="1022" r="4.500"/></g>
<g fill="#1d2a36"><circle cx="1064" cy="1051" r="17.500"/><circle cx="1102" cy="1051" r="17.500"/><circle cx="1141" cy="1051" r="17.500"/><circle cx="1179" cy="1051" r="17.500"/></g>
<g fill="#eef3f3"><circle cx="1064" cy="1049" r="17.500"/><circle cx="1102" cy="1049" r="17.500"/><circle cx="1141" cy="1049" r="17.500"/><circle cx="1179" cy="1049" r="17.500"/></g>
<g stroke="#222" stroke-width="1.200" stroke-linejoin="round">
 <g fill="none"><polygon points="1054,1044 1060,1049 1054,1054"/><polygon points="1061,1044 1067,1049 1061,1054"/><polygon points="1068,1044 1074,1049 1068,1054"/></g>
 <polygon fill="#222" points="1092,1044 1098,1049 1092,1054"/><g fill="none"><polygon points="1099,1044 1105,1049 1099,1054"/><polygon points="1106,1044 1112,1049 1106,1054"/></g>
 <g fill="#222"><polygon points="1131,1044 1137,1049 1131,1054"/><polygon points="1138,1044 1144,1049 1138,1054"/></g><polygon fill="none" points="1145,1044 1151,1049 1145,1054"/>
 <g fill="#222"><polygon points="1169,1044 1175,1049 1169,1054"/><polygon points="1176,1044 1182,1049 1176,1054"/><polygon points="1183,1044 1189,1049 1183,1054"/></g>
</g>

<!-- bottom panel 3 -->
<path d="M1694 1090V1006A22 22 0 0 1 1716 984H1930V1090Z" fill="#1c2b38"/>
<path d="M1701 1090V1007A16 16 0 0 1 1717 991H1930V1090Z" fill="#34495a" stroke="#566f80" stroke-width="1.500"/>
<text x="1727" y="1006" class="t" textLength="28" lengthAdjust="spacingAndGlyphs">UNDO</text>
<text x="1780" y="1006" class="t" textLength="26" lengthAdjust="spacingAndGlyphs">REDO</text>
<text x="1832" y="1006" class="t" textLength="23" lengthAdjust="spacingAndGlyphs">GRID</text>
<text x="1884" y="1006" class="t" textLength="24" lengthAdjust="spacingAndGlyphs">HELP</text>
<use href="#tmi" x="1727" y="1040"/><use href="#tmi" x="1780" y="1040"/><use href="#tmi" x="1832.500" y="1040"/><use href="#tmi" x="1885" y="1040"/>
<path d="M1716 1040Q1727 1030 1739 1046" fill="none" stroke="#222" stroke-width="4"/><polygon points="1713,1033 1722,1046 1711,1047" fill="#222"/>
<path d="M1769 1046Q1780 1030 1791 1040" fill="none" stroke="#222" stroke-width="4"/><polygon points="1794,1033 1796,1047 1785,1046" fill="#222"/>
<path d="M1826 1025V1055M1838 1025V1055M1818 1034H1847M1818 1046H1847" stroke="#222" stroke-width="3.500"/>
<text x="1885" y="1053" font-size="36" font-weight="bold" fill="#222" text-anchor="middle">?</text>

<!-- right panel -->
<path d="M1930 578H1785A22 22 0 0 0 1763 600V916A22 22 0 0 0 1785 938H1930Z" fill="#1c2b38"/>
<path d="M1930 586H1785A16 16 0 0 0 1769 602V914A16 16 0 0 0 1785 930H1930Z" fill="#3e5566" stroke="#5a7283" stroke-width="1.500"/>
<rect x="1779" y="597" width="58.700" height="331" rx="8" fill="#2a3541"/>
<rect x="1844" y="597" width="59" height="331" rx="8" fill="#2a3541"/>
<text x="1815" y="612" class="t" textLength="26" lengthAdjust="spacingAndGlyphs">MUTE</text>
<text x="1880.700" y="612" class="t" textLength="17" lengthAdjust="spacingAndGlyphs">DIM</text>
<text x="1815" y="663" class="t" textLength="13" lengthAdjust="spacingAndGlyphs">UP</text>
<text x="1880.700" y="663" class="t" textLength="13" lengthAdjust="spacingAndGlyphs">UP</text>
<text x="1814" y="916" class="t" textLength="29" lengthAdjust="spacingAndGlyphs">DOWN</text>
<text x="1880" y="916" class="t" textLength="29" lengthAdjust="spacingAndGlyphs">DOWN</text>
<use href="#sm" x="1815" y="631"/><use href="#sm" x="1880.700" y="631"/><use href="#sm" x="1815" y="682"/><use href="#sm" x="1880.700" y="682"/><use href="#sm" x="1815" y="888"/><use href="#sm" x="1880.700" y="888"/>
<path d="M1809 628h4l5-4v14l-5-4h-4zM1820 628v6" fill="#222" stroke="#222" stroke-width=".8"/>
<circle cx="1880.700" cy="629" r="5.500" fill="#222"/><rect x="1878.500" y="634" width="4.500" height="4" fill="#222"/>
<path d="M1807 682H1823M1815 674V690M1872.700 682H1888.700M1880.700 674V690M1808 888H1822M1873.700 888H1887.700" stroke="#222" stroke-width="3.200"/>
<path d="M1788 693V612Q1788 605 1797 605M1788 825V906Q1788 913 1797 913M1854 693V612Q1854 605 1863 605M1854 825V906Q1854 913 1863 913" fill="none" stroke="#e8eff1" stroke-width="1.600"/>
<text transform="translate(1793 811) rotate(-90)" class="t" style="text-anchor:start;font-size:11.500px" textLength="103" lengthAdjust="spacingAndGlyphs">INSTRUMENT VOLUME</text>
<text transform="translate(1858 804) rotate(-90)" class="t" style="text-anchor:start;font-size:11.500px" textLength="89" lengthAdjust="spacingAndGlyphs">LIGHT BRIGHTNESS</text>
<rect x="1810.500" y="726" width="9" height="123" rx="4.500" fill="none" stroke="#e0257f" stroke-width="1.500"/>
<rect x="1876.500" y="720" width="9" height="129" rx="4.500" fill="none" stroke="#e0257f" stroke-width="1.500"/>
<rect x="1800" y="752" width="30" height="46" rx="6" fill="#1f2a35"/>
<rect x="1803" y="748.500" width="24" height="45" rx="5" fill="#dbe7e8" stroke="#5f7c8c" stroke-width="1.500"/>
<rect x="1804.500" y="751" width="21" height="4" fill="#b9c7c9"/><rect x="1804.500" y="758" width="21" height="5" fill="#b9c7c9"/><rect x="1804.500" y="778" width="21" height="5" fill="#b9c7c9"/><rect x="1804.500" y="786" width="21" height="5" fill="#b9c7c9"/>
<rect x="1865" y="713" width="31" height="46" rx="6" fill="#1f2a35"/>
<rect x="1868" y="709.500" width="25" height="45" rx="5" fill="#dbe7e8" stroke="#5f7c8c" stroke-width="1.500"/>
<rect x="1869.500" y="712" width="22" height="4" fill="#b9c7c9"/><rect x="1869.500" y="719" width="22" height="5" fill="#b9c7c9"/><rect x="1869.500" y="739" width="22" height="5" fill="#b9c7c9"/><rect x="1869.500" y="747" width="22" height="5" fill="#b9c7c9"/>
</svg>
</body></html>
